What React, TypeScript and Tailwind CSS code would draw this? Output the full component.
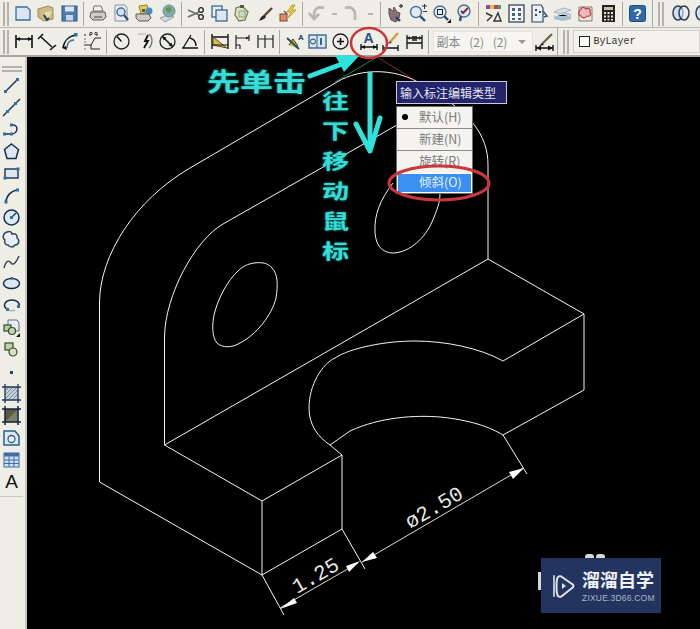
import type { ReactNode } from "react";

const navy = "#16324f";
const blue = "#2f6fa3";

const icons: Record<string, ReactNode> = {
  new: <path d="M3 4h11l3 3v10H3z" fill="#dbe6f2" stroke="#3b6f9e" strokeWidth="1.3" />,
  open: (
    <>
      <path d="M2 6l10-3 5 2v11l-9 2-6-4z" fill="#cdbb84" stroke="#9a8a58" />
      <path d="M9 9l7-1-3 7-5-1z" fill="#e6dcae" />
      <path d="M8 12l3 5 2-2" stroke="#24405c" strokeWidth="2" fill="none" />
    </>
  ),
  save: (
    <>
      <rect x="3" y="3" width="15" height="15" fill="#4f7cae" stroke="#2f5583" />
      <rect x="6" y="3.5" width="9" height="5" fill="#dbe6f2" />
      <rect x="7" y="12" width="7" height="5.5" fill="#c9d6e5" />
    </>
  ),
  print: (
    <>
      <path d="M6 3h7l2 5H5z" fill="#f2f2f2" stroke="#77706a" />
      <path d="M3 9h14l1 5-3 3H5l-3-3z" fill="#d0cbc4" stroke="#5c5650" />
      <path d="M6 14h8" stroke="#444" />
    </>
  ),
  preview: (
    <>
      <path d="M4 2h10l2 3v13H4z" fill="#e8eef5" stroke="#7d93a8" />
      <circle cx="10" cy="9" r="4" fill="#cfe0f0" stroke="#47698c" strokeWidth="1.4" />
      <path d="M13 12l4 5" stroke="#344e6a" strokeWidth="2.2" />
    </>
  ),
  plot: (
    <>
      <path d="M5 3l8-1 2 7-8 2z" fill="#e6cf50" stroke="#8d7d2a" />
      <circle cx="15" cy="8" r="3.5" fill="#4a8ac4" />
      <path d="M2 11h13l2 4-3 3H5l-3-3z" fill="#cfcac2" stroke="#5d5850" />
      <rect x="8" y="6" width="3" height="3" fill="#555" />
    </>
  ),
  publish: (
    <>
      <path d="M3 15l10-4 4 3-9 5z" fill="#d5d8dc" stroke="#9aa0a6" />
      <circle cx="12" cy="8" r="6" fill="#84a9a0" stroke="#6f8f98" />
      <path d="M9 5l4-1 2 3-3 3-3-2z" fill="#5b9a5a" />
    </>
  ),
  cut: (
    <>
      <circle cx="15" cy="7" r="2.3" fill="none" stroke="#222" strokeWidth="1.3" />
      <circle cx="15" cy="14" r="2.3" fill="none" stroke="#222" strokeWidth="1.3" />
      <path d="M2 7l11 5M2 14l11-5" stroke="#6d6d6d" strokeWidth="1.5" />
    </>
  ),
  copy: (
    <>
      <rect x="3" y="3" width="10" height="11" fill="#e5edf5" stroke="#2f5d88" strokeWidth="1.2" />
      <rect x="7" y="7" width="11" height="11" fill="#dce7f2" stroke="#2f5d88" strokeWidth="1.2" />
    </>
  ),
  paste: (
    <>
      <path d="M10 3l6 6-3 8-6 1-4-6 1-7z" fill="#e9e3b5" stroke="#6f7c62" strokeWidth="1.3" />
      <path d="M7 8h6v6H7z" fill="#c8dcc8" stroke="#8ba28b" />
      <rect x="8" y="2" width="4" height="3" fill="#555" />
    </>
  ),
  brush: (
    <>
      <path d="M17 5L9 13" stroke="#5a4635" strokeWidth="2.4" />
      <path d="M9 12l-3 2-2 4 5-2 2-2z" fill="#2e2a28" />
    </>
  ),
  match: (
    <>
      <rect x="2" y="11" width="7" height="7" fill="#e08a6a" stroke="#7b4a38" />
      <path d="M14 2l-5 7h4l-3 6 8-8h-4l3-5z" fill="#e8c93c" stroke="#a88b20" strokeWidth=".7" />
      <path d="M6 8l3 3" stroke="#555" strokeWidth="1.4" />
    </>
  ),
  undo: <path d="M17 5c-6-2-10 1-10 7v5M2 10l5 6 5-5" fill="none" stroke="#b7b5ae" strokeWidth="2.6" />,
  redo: <path d="M3 5c6-2 10 1 10 7v5" fill="none" stroke="#b7b5ae" strokeWidth="2.6" />,
  pan: (
    <>
      <path d="M4 5l4 3 1-4 3 5 3 1-1 5-3 4-5-2-2-6z" fill="#8c6f76" stroke="#51545c" />
      <path d="M14 3h4M16 1v4" stroke="#444" strokeWidth="1.4" />
      <path d="M11 14l4 4" stroke="#23415f" strokeWidth="2.4" />
    </>
  ),
  zoomReal: (
    <>
      <circle cx="8" cy="9" r="5.5" fill="#dfeaf3" stroke="#50708e" strokeWidth="1.4" />
      <path d="M12 13l5 5" stroke="#2f4c68" strokeWidth="2.4" />
      <path d="M14 3h5M16.5 1v5M15 8.5h4" stroke="#333" />
    </>
  ),
  zoomWin: (
    <>
      <circle cx="9" cy="9" r="6" fill="#dfeaf3" stroke="#50708e" strokeWidth="1.4" />
      <rect x="6.5" y="6.5" width="5" height="5" fill="none" stroke="#222" />
      <path d="M13 13l4 4" stroke="#2f4c68" strokeWidth="2.4" />
      <path d="M16 20l4-4v4z" fill="#111" />
    </>
  ),
  zoomPrev: (
    <>
      <circle cx="10" cy="8" r="6" fill="#dfeaf3" stroke="#50708e" strokeWidth="1.4" />
      <path d="M7 13l-1 5" stroke="#2f4c68" strokeWidth="2.4" />
      <path d="M14 5L9 10l-2-2" stroke="#7b2f3a" strokeWidth="2" fill="none" />
    </>
  ),
  props: (
    <>
      <rect x="3" y="2" width="4" height="4" fill="#8a49a8" />
      <rect x="7" y="2" width="4" height="4" fill="#e0c63a" />
      <rect x="11" y="2" width="4" height="4" fill="#c0455c" />
      <rect x="15" y="2" width="3" height="4" fill="#4a9a6a" />
      <path d="M3 10l6 3-5 5M15 10l-4 8h7z" fill="none" stroke="#333" strokeWidth="1.4" />
    </>
  ),
  grid: (
    <>
      <rect x="3" y="2" width="15" height="17" fill="#f3f5f7" stroke="#24384d" strokeWidth="1.2" />
      <path d="M6 5h3v3H6zM12 5h3v3h-3zM6 10h3v3H6zM12 10h3v3h-3zM6 15h3v2H6zM12 15h3v2h-3z" fill="#48627c" />
    </>
  ),
  palette: (
    <>
      <path d="M3 2h9l2 3v14H3z" fill="#edf1f5" stroke="#33495f" strokeWidth="1.2" />
      <path d="M6 6h2v2H6zM6 11h2v2H6zM10 8h2v2h-2z" fill="#33495f" />
      <path d="M14 8l4 5-3 1" fill="none" stroke="#2f5d88" strokeWidth="1.6" />
    </>
  ),
  sheet: (
    <>
      <path d="M2 9l9-4 8 2-9 4z" fill="#d6dfe8" stroke="#a9b6c2" />
      <path d="M2 13l9-4 8 2v5l-8 2-9-2z" fill="#a8bccc" />
      <path d="M3 13l8-2 7 2" stroke="#f3f6f9" />
    </>
  ),
  markup: (
    <>
      <path d="M4 4h13v14H4z" fill="#f0e6d8" stroke="#8b7a6c" />
      <path d="M6 6c2-3 4-1 5 0 3-2 5 1 4 3 2 2 0 5-3 4-2 3-5 2-6 0-3 0-3-5 0-7z" fill="#efb8bc" stroke="#b8404c" strokeWidth="1.2" />
    </>
  ),
  calc: (
    <>
      <rect x="4" y="2" width="13" height="17" fill="#26221f" />
      <rect x="6" y="4" width="9" height="3" fill="#bcc7a8" />
      <path d="M6 9h2v2H6zM9.5 9h2v2h-2zM13 9h2v2h-2zM6 12.5h2v2H6zM9.5 12.5h2v2h-2zM13 12.5h2v2h-2zM6 16h2v1.5H6zM9.5 16h2v1.5h-2zM13 16h2v1.5h-2z" fill="#e8e4dc" />
    </>
  ),
  help: (
    <>
      <rect x="2.5" y="2.5" width="16" height="16" rx="2" fill="#2e69a8" stroke="#1f4a7a" />
      <text x="10.5" y="15.5" textAnchor="middle" fontSize="14" fontWeight="700" fill="#fff" fontFamily="Liberation Sans, sans-serif">?</text>
    </>
  ),
  orbitA: (
    <>
      <ellipse cx="7" cy="10" rx="5" ry="7" fill="#cfe0ef" stroke="#2c3f55" strokeWidth="1.5" />
      <ellipse cx="13" cy="10" rx="5" ry="7" fill="#e2edf6" fillOpacity=".6" stroke="#2c3f55" strokeWidth="1.5" />
    </>
  ),

  dLinear: (
    <>
      <path d="M3 4v13M19 4v13M3 8h16" stroke="#111" strokeWidth="1.6" />
      <path d="M3 8l4-2v4zM19 8l-4-2v4z" fill="#111" />
    </>
  ),
  dAligned: <path d="M5 6l11 10M2 8l5-5M14 19l6-5" stroke="#111" strokeWidth="1.5" />,
  dArc: (
    <>
      <path d="M4 17C5 10 10 5 17 4" fill="none" stroke="#111" strokeWidth="1.5" />
      <path d="M8 17c0-5 3-8 7-8" fill="none" stroke={blue} strokeWidth="1.5" />
      <rect x="15" y="2" width="3.5" height="3.5" fill={blue} />
      <path d="M3 17l4-2 1 4z" fill="#111" />
    </>
  ),
  dOrd: (
    <>
      <path d="M2 4h2M7 4h2M14 4h2M2 14h7l4-7h6M9 14v4h9" fill="none" stroke="#222" />
      <path d="M2 8h2M2 11h2M2 18h2" stroke="#777" />
      <circle cx="14" cy="2.5" r="1.2" fill="none" stroke="#333" />
      <circle cx="9" cy="2.5" r="1.2" fill="none" stroke="#333" />
    </>
  ),
  dRadius: (
    <>
      <circle cx="10.5" cy="10.5" r="7.5" fill="none" stroke="#222" strokeWidth="1.3" />
      <path d="M10.5 10.5L6 5.5" stroke="#111" strokeWidth="1.5" />
    </>
  ),
  dJog: (
    <>
      <path d="M15 3c4 3 4 10 0 14" fill="none" stroke="#777" strokeWidth="1.3" />
      <path d="M14 4l-3 6h3l-4 7" fill="none" stroke="#111" strokeWidth="1.8" />
      <path d="M4 3h8" stroke="#aaa" />
    </>
  ),
  dDia: (
    <>
      <circle cx="10.5" cy="10.5" r="7.5" fill="none" stroke="#222" strokeWidth="1.3" />
      <path d="M5.5 5.5l10 10" stroke="#111" strokeWidth="1.5" />
      <path d="M5.5 5.5l4 1-3 3zM15.5 15.5l-4-1 3-3z" fill="#111" />
    </>
  ),
  dAng: (
    <>
      <path d="M2 17h16M3 17L11 4" fill="none" stroke="#111" strokeWidth="1.3" />
      <path d="M10 7c4 1 6 4 6 8" fill="none" stroke="#111" strokeWidth="1.3" />
    </>
  ),
  dQuick: (
    <>
      <path d="M3 3v15M19 3v15M3 6h16" stroke="#111" strokeWidth="1.4" />
      <path d="M4 6l14 11-14-3z" fill="#d8bf50" stroke="#5a5020" />
      <path d="M3 14h16" stroke="#111" />
    </>
  ),
  dBase: (
    <>
      <path d="M4 4v14M17 4v6M8 14v4M4 7h13M4 14h4" stroke="#222" strokeWidth="1.2" />
      <path d="M17 7l-3-1.5v3z" fill="#222" />
    </>
  ),
  dCont: <path d="M3 4v13M10 4v13M18 4v13M3 8h15" stroke="#222" strokeWidth="1.2" />,
  dTol: (
    <>
      <path d="M5 14l4-6 5 7-2 2" fill="#cbb84c" stroke="#3a3a1c" />
      <path d="M3 7l12 11" stroke="#2f4c68" strokeWidth="2" />
      <text x="14" y="9" fontSize="8" fontFamily="Liberation Sans, sans-serif" fill="#1d3f63" fontWeight="700">A</text>
    </>
  ),
  dFcf: (
    <>
      <rect x="2" y="4" width="17" height="13" fill="#d8e6f2" stroke="#2c5f90" strokeWidth="1.3" />
      <path d="M10 4v13" stroke="#2c5f90" />
      <circle cx="6" cy="10.5" r="2.5" fill="none" stroke="#1d3f63" />
      <path d="M14 7v7" stroke="#1d3f63" strokeWidth="1.6" />
    </>
  ),
  dCenter: (
    <>
      <circle cx="10.5" cy="10.5" r="7.5" fill="none" stroke="#222" strokeWidth="1.3" />
      <path d="M10.5 7v7M7 10.5h7" stroke="#111" strokeWidth="1.6" />
    </>
  ),
  dEdit: (
    <>
      <text x="10.5" y="12" textAnchor="middle" fontSize="14" fontWeight="700" fontFamily="Liberation Sans, sans-serif" fill="#1f4f8f">A</text>
      <path d="M3 13v6M19 13v6M3 16h16" stroke="#111" strokeWidth="1.4" />
      <path d="M3 16l4-2v4zM19 16l-4-2v4z" fill="#111" />
    </>
  ),
  dTedit: (
    <>
      <path d="M9 11l8-9" stroke="#c9a23a" strokeWidth="2.4" />
      <path d="M6 13l3-3 2 2z" fill="#6a4a20" />
      <path d="M2 14v6M17 14v6M2 17h15" stroke="#111" strokeWidth="1.3" />
    </>
  ),
  dUpdate: (
    <>
      <path d="M3 4v14M18 4v14M3 7h15M3 12h15" stroke="#111" strokeWidth="1.3" />
      <path d="M3 7l3-2v4zM18 7l-3-2v4zM8 5h5v5H8z" fill="#222" fillOpacity=".8" />
    </>
  ),
  dStyle: (
    <>
      <path d="M8 13L18 3" stroke="#6f5f48" strokeWidth="2.2" />
      <path d="M5 15l3-3 2 2z" fill="#26221f" />
      <path d="M2 14v6M19 14v6M2 17h17" stroke="#111" strokeWidth="1.4" />
      <path d="M2 17l5-2.5v5zM19 17l-5-2.5v5z" fill="#111" />
    </>
  ),

  line: (
    <>
      <path d="M5 16L16 5" stroke={navy} strokeWidth="1.5" />
      <rect x="3" y="15" width="3" height="3" fill={blue} />
      <rect x="15" y="3" width="3" height="3" fill={blue} />
    </>
  ),
  xline: (
    <>
      <path d="M2 19L19 2" stroke={navy} strokeWidth="1.5" />
      <rect x="5" y="13" width="3" height="3" fill={blue} />
      <rect x="13" y="5" width="3" height="3" fill={blue} />
    </>
  ),
  pline: (
    <>
      <path d="M2 15h8c7 0 8-9 2-9h-1" fill="none" stroke={navy} strokeWidth="1.5" />
      <rect x="2" y="13.5" width="3" height="3" fill={blue} />
      <rect x="9" y="13.5" width="3" height="3" fill={blue} />
      <rect x="9" y="4.5" width="3" height="3" fill={blue} />
    </>
  ),
  polygon: <path d="M10.5 3l7 5.5-2.5 9H6l-2.5-9z" fill="#dce7f1" stroke={navy} strokeWidth="1.5" />,
  rect: (
    <>
      <rect x="4" y="6" width="13" height="9" fill="#dce7f1" stroke={navy} strokeWidth="1.4" />
      <rect x="2.5" y="13.5" width="3" height="3" fill={blue} />
      <rect x="15.5" y="4.5" width="3" height="3" fill={blue} />
    </>
  ),
  arc: (
    <>
      <path d="M5 17C5 11 10 6 16 5" fill="none" stroke={navy} strokeWidth="1.5" />
      <rect x="3.5" y="15.5" width="3" height="3" fill={blue} />
      <rect x="15" y="3.5" width="3" height="3" fill={blue} />
    </>
  ),
  circle: (
    <>
      <circle cx="10.5" cy="10.5" r="7.5" fill="#dce7f1" stroke={navy} strokeWidth="1.5" />
      <path d="M10.5 10.5L15 6" stroke={navy} strokeWidth="1.3" />
      <rect x="9" y="9" width="3" height="3" fill={blue} />
    </>
  ),
  cloud: (
    <path
      d="M6 3c3-1 5 0 5 2 3-1 6 1 5 4 3 2 2 7-2 7-2 3-6 2-7 0-3 0-4-3-3-5-3-2-2-7 2-8z"
      fill="#e8eef4"
      stroke="#31465c"
      strokeWidth="1.5"
    />
  ),
  spline: <path d="M3 17C5 9 8 9 10 12s5 0 8-7" fill="none" stroke="#3a3f45" strokeWidth="1.4" />,
  ellipse: (
    <>
      <ellipse cx="10.5" cy="10.5" rx="8" ry="5" fill="#dce7f1" stroke={navy} strokeWidth="1.5" />
      <rect x="9.5" y="4" width="2.5" height="2.5" fill={blue} />
    </>
  ),
  ellArc: (
    <>
      <path d="M6 14C1 11 4 5 11 5c5 0 8 3 7 6" fill="none" stroke={navy} strokeWidth="1.5" />
      <path d="M7 15c3 1 5 1 7 0" fill="none" stroke="#9db4c6" strokeWidth="1.5" />
      <rect x="5" y="13" width="3" height="3" fill={blue} />
      <rect x="16" y="10" width="3" height="3" fill={blue} />
    </>
  ),
  insert: (
    <>
      <path d="M7 3h9l2 3v8H7z" fill="#e6edf4" stroke="#587089" />
      <rect x="3" y="8" width="7" height="6" fill="#b8cc9c" stroke="#2d4a33" strokeWidth="1.2" />
      <circle cx="11" cy="14" r="3.5" fill="#c7d4a6" stroke="#2d4a33" strokeWidth="1.2" />
      <path d="M15 20l4-4v4z" fill="#111" />
    </>
  ),
  block: (
    <>
      <rect x="4" y="4" width="8" height="7" fill="#c4d49c" stroke="#2d4a33" strokeWidth="1.2" />
      <circle cx="12" cy="13" r="4" fill="#d5e0c2" stroke="#2d4a33" strokeWidth="1.2" />
    </>
  ),
  point: <rect x="9" y="10" width="3" height="3" fill="#24466a" />,
  hatch: (
    <>
      <rect x="4" y="4" width="13" height="13" fill="#c3ced8" />
      <path d="M4 8l4-4M4 12l8-8M4 16L16 4M8 16l9-9M12 16l5-5" stroke="#7a8a99" />
      <path d="M4 1v19M17 1v19M1 4h19M1 17h19" stroke="#1c3956" strokeWidth="1.3" />
    </>
  ),
  gradient: (
    <>
      <rect x="4" y="4" width="13" height="13" fill="#595a45" />
      <path d="M4 17L17 4v13z" fill="#7d7f66" />
      <path d="M4 1v19M17 1v19M1 4h19M1 17h19" stroke="#10243a" strokeWidth="1.5" />
    </>
  ),
  region: (
    <>
      <path d="M3 4h11l4 5v9H3z" fill="#dce8f2" stroke="#2a5f8c" strokeWidth="1.5" />
      <circle cx="10.5" cy="12" r="3.5" fill="#f0f3f6" stroke="#2a5f8c" strokeWidth="1.3" />
    </>
  ),
  table: (
    <>
      <rect x="3" y="4" width="15" height="14" fill="#cfe0f2" stroke="#3d6ea8" />
      <rect x="3" y="4" width="15" height="3.5" fill="#3d6ea8" />
      <path d="M3 11h15M3 14.5h15M8 7.5V18M13 7.5V18" stroke="#3d6ea8" />
    </>
  ),
};

function Icon({ name, w = 23, h = 26 }: { name: string; w?: number; h?: number }) {
  return (
    <span className="flex shrink-0 items-center justify-center" style={{ width: w, height: h }}>
      <svg viewBox="0 0 21 21" className="h-[21px] w-[21px] overflow-visible">
        {icons[name]}
      </svg>
    </span>
  );
}

function Sep() {
  return (
    <span className="flex h-[24px] w-[6px] shrink-0 justify-center">
      <span className="h-full w-px bg-[#a9a79f]" />
    </span>
  );
}

function Grip({ className = "" }: { className?: string }) {
  return (
    <span className={`flex h-[24px] shrink-0 gap-[2px] ${className}`}>
      <span className="h-full w-[2px] border-x border-x-[#b4b2aa] bg-white" />
      <span className="h-full w-[2px] border-x border-x-[#b4b2aa] bg-white" />
    </span>
  );
}

function Drop({ w }: { w: number }) {
  return (
    <span className="flex shrink-0 items-center justify-center" style={{ width: w }}>
      <span className="h-[2px] w-[5px] bg-[#b7b5ae]" />
    </span>
  );
}

const leftTools = [
  "line", "xline", "pline", "polygon", "rect", "arc", "circle", "cloud", "spline", "ellipse",
  "ellArc", "insert", "block", "point", "hatch", "gradient", "region", "table",
];

function DrawingLines() {
  return (
    <g fill="none" stroke="#f4f4f4" strokeWidth="1">
      <path d="M99.5 482V302C100 255 135 200 190 168L337 82C360 68 400 66 430 90C470 112 488 135 488 165V259" />
      <path d="M164.500 445V337C165 295 195 240 223 224L397 125" />
      <path d="M254 263C262 262 268 263 272 268C278 274 278 285 276 298C272 315 256 335 240 343C232 348 222 348 217 343C212 337 212 325 214 315C218 298 228 280 238 271C243 266 248 264 254 263Z" />
      <path d="M393 183C380 200 374 215 375 232C376 248 384 253 394 253C410 252 425 238 432 222C437 210 440 203 440 193" />
      <path d="M99.5 482L262 575L342 529V455L262 501L164.5 445L488 259L584 314V390L503 435C490 427 470 420 440 417C415 415 380 417 350 431L330 445L342 455" />
      <path d="M262 501V575M584 314L503 361C480 348 445 341 415 341C385 341 350 348 335 358C322 364 309 385 309 408C309 425 318 437 330 445" />
      <path d="M503 435L527 474M342 529L365 569M262 575L284 615" />
      <path d="M280 608L358 563M362 562L523 468" strokeWidth=".9" />
      <g fill="#fff" stroke="none">
        <path d="M280 609L294 598L297 603Z" />
        <path d="M360 561L346 566L349 572Z" />
        <path d="M362 562L373 552L377 558Z" />
        <path d="M524 468L509 472L513 479Z" />
      </g>
      <g fill="#e8e8e8" stroke="none" fontFamily="Liberation Mono, monospace" fontSize="21">
        <text x="297" y="594" transform="rotate(-30 297 594)">1.25</text>
        <text x="410" y="529" transform="rotate(-30 410 529)">ø2.50</text>
      </g>
    </g>
  );
}

export default function App() {
  return (
    <div className="relative flex h-[629px] w-[700px] flex-col overflow-hidden bg-black font-['Noto_Sans_CJK_SC',sans-serif]">
      {/* standard toolbar */}
      <div className="flex h-[28px] shrink-0 items-center overflow-hidden border-b border-b-[#b9b7af] bg-[#eeede6]">
        <Grip className="w-[11.5px] pl-[3px]" />
        <Icon name="new" />
        <Icon name="open" />
        <Icon name="save" />
        <Sep />
        <Icon name="print" />
        <Icon name="preview" />
        <Icon name="plot" />
        <Icon name="publish" />
        <Sep />
        <Icon name="cut" />
        <Icon name="copy" />
        <Icon name="paste" />
        <Icon name="brush" />
        <Icon name="match" />
        <Sep />
        <Icon name="undo" />
        <Drop w={12} />
        <Icon name="redo" />
        <Drop w={14} />
        <Sep />
        <Icon name="pan" />
        <Icon name="zoomReal" />
        <Icon name="zoomWin" />
        <Icon name="zoomPrev" />
        <Sep />
        <Icon name="props" />
        <Icon name="grid" />
        <Icon name="palette" />
        <Icon name="sheet" />
        <Icon name="markup" />
        <Icon name="calc" />
        <Sep />
        <Icon name="help" />
        <span className="ml-[3px] h-full w-px shrink-0 bg-[#a9a79f]" />
        <Grip className="ml-[5px] w-[12px]" />
        <Icon name="orbitA" />
        <Icon name="orbitA" />
      </div>

      {/* dimension toolbar */}
      <div className="flex h-[29px] shrink-0 items-center overflow-hidden border-b-2 border-b-[#a8a69e] bg-[#eeede6]">
        <Grip className="w-[11.5px] pl-[3px]" />
        <Icon name="dLinear" />
        <Icon name="dAligned" />
        <Icon name="dArc" />
        <Icon name="dOrd" />
        <Sep />
        <Icon name="dRadius" />
        <Icon name="dJog" />
        <Icon name="dDia" />
        <Icon name="dAng" />
        <Sep />
        <Icon name="dQuick" />
        <Icon name="dBase" />
        <Icon name="dCont" />
        <Sep />
        <Icon name="dTol" />
        <Icon name="dFcf" />
        <Icon name="dCenter" />
        <span className="w-[5px] shrink-0" />
        <Icon name="dEdit" />
        <Icon name="dTedit" />
        <Icon name="dUpdate" />
        <Sep />
        <span className="ml-[1px] flex h-[21px] w-[100px] shrink-0 items-center justify-between border border-[#e4e2da] bg-[#f6f5f1] pl-[3px] pr-[3px] text-[12px] text-[#8a8a8a]">
          <span className="whitespace-pre [word-spacing:6px]">副本 (2) (2)</span>
          <span className="mr-[3px] h-0 w-0 border-x-[4px] border-t-[4px] border-x-transparent border-t-[#9a9a9a]" />
        </span>
        <Icon name="dStyle" />
        <span className="ml-[1px] h-full w-px shrink-0 bg-[#a9a79f]" />
        <Grip className="ml-[5px] w-[10px]" />
        <span className="flex h-[23px] flex-1 items-center gap-[4px] border border-[#d4d2ca] bg-[#f3f2ec] pl-[5px] font-['Liberation_Mono',monospace] text-[10px] text-[#333]">
          <span className="h-[11px] w-[11px] border border-[#222] bg-white" />
          ByLayer
        </span>
      </div>

      <div className="flex min-h-0 flex-1">
        {/* draw toolbar */}
        <div className="flex w-[27px] shrink-0 flex-col items-center border-r-2 border-r-[#c9c7bf] bg-[#eeede6] pr-[2px]">
          <div className="mb-[2px] mt-[9px] flex w-[20px] flex-col gap-[2px]">
            <span className="h-[2px] border-y border-y-[#b4b2aa] bg-white" />
            <span className="h-[2px] border-y border-y-[#b4b2aa] bg-white" />
          </div>
          {leftTools.map((t) => (
            <Icon key={t} name={t} w={24} h={22} />
          ))}
          <span className="flex h-[22px] items-center font-['Liberation_Sans',sans-serif] text-[19px] leading-none text-[#111]">A</span>
          <span className="mt-[4px] h-px w-full bg-[#c9c7bf]" />
        </div>

        {/* model space */}
        <div className="relative min-w-0 flex-1 bg-black">
          <svg viewBox="27 57 673 572" className="block h-full w-full">
            <DrawingLines />
          </svg>

          {/* watermark */}
          <span className="absolute left-[511px] top-[515px] h-[18px] w-[4px] bg-[#d8d8d8]" />
          <span className="absolute left-[558px] top-[497px] h-[6px] w-[9px] rounded-full bg-[#d8d8d8]" />
          <span className="absolute left-[569px] top-[497px] h-[6px] w-[9px] rounded-full bg-[#d8d8d8]" />
          <div className="absolute left-[514px] top-[501px] flex h-[55px] w-[120px] items-center gap-[6px] bg-[#23355f] pl-[7px]">
            <svg viewBox="0 0 28 28" className="h-[28px] w-[28px]">
              <path d="M6 4v20" stroke="#b8c2d6" strokeWidth="2" strokeLinecap="round" fill="none" />
              <path d="M10 5c1-1 3-1 4 0l10 7c2 1 2 3 0 4l-10 8c-1 1-3 1-4 0-2-2-2-17 0-19z" fill="none" stroke="#dfe4ee" strokeWidth="2" />
              <path d="M14 11v6l4-3z" fill="#dfe4ee" />
            </svg>
            <div className="flex flex-col">
              <span className="whitespace-nowrap text-[18px] font-bold leading-[20px] text-[#eef1f6]">溜溜自学</span>
              <span className="mt-[4px] whitespace-nowrap font-['Liberation_Sans',sans-serif] text-[8.5px] leading-[10px] tracking-[0.2px] text-[#a9b4c9]">ZIXUE.3D66.COM</span>
            </div>
          </div>

          {/* tooltip and edit type menu */}
          <div className="absolute left-[369px] top-[24px] flex h-[23px] w-[111px] items-center border border-[#c8c8e0] bg-[#24246b] pl-[3px] text-[12px] text-[#e4e6f2]">
            输入标注编辑类型
          </div>
          <div className="absolute left-[369px] top-[49px] flex w-[77px] flex-col border border-[#6e6e6e] bg-[#f4f3ef] text-[12.5px] text-[#7c7c7c]">
            <div className="relative flex h-[21.5px] items-center border-b border-b-[#8a8a8a] pl-[22px]">
              <span className="absolute left-[5px] h-[6px] w-[6px] rounded-full bg-black" />
              默认(H)
            </div>
            <div className="flex h-[22px] items-center border-b border-b-[#8a8a8a] pl-[22px]">新建(N)</div>
            <div className="flex h-[22px] items-center pl-[22px]">旋转(R)</div>
            <div className="flex h-[20px] items-center border border-white bg-[#3a8ff0] pl-[21px] text-[#e9f2ff]">倾斜(O)</div>
          </div>

          {/* hand written notes */}
          <span className="absolute left-[180px] top-[3px] origin-center scale-y-75 whitespace-nowrap text-[33px] font-bold leading-[40px] text-[#38dcd6] [text-shadow:0_0_3px_#0a9c98]">
            先单击
          </span>
          <div className="absolute left-[295px] top-[29px] flex origin-top scale-y-75 flex-col text-[27px] font-bold leading-[40px] text-[#38dcd6] [text-shadow:0_0_3px_#0a9c98]">
            <span>往</span>
            <span>下</span>
            <span>移</span>
            <span>动</span>
            <span>鼠</span>
            <span>标</span>
          </div>
        </div>
      </div>

      {/* marks that were painted over the whole window */}
      <svg viewBox="0 0 700 629" className="pointer-events-none absolute inset-0 h-[629px] w-[700px]">
        <path d="M377 57L415 80" stroke="#a33" strokeWidth=".8" />
        <path d="M377 57L335 82" stroke="#3a6" strokeWidth=".8" />
        <ellipse cx="369" cy="43" rx="18" ry="15" fill="none" stroke="#c9353c" strokeWidth="2.5" />
        <ellipse cx="439" cy="183" rx="50" ry="17" fill="none" stroke="#c9383e" strokeWidth="3" />
        <path d="M310 76L350 61" stroke="#2fe3dc" strokeWidth="5" strokeLinecap="round" />
        <path d="M335 55L359 56L344 72Z" fill="#2fe3dc" />
        <path d="M370 72V148" stroke="#2fe3dc" strokeWidth="5" />
        <path d="M356 124L370 151L380 118" fill="none" stroke="#2fe3dc" strokeWidth="5" strokeLinecap="round" strokeLinejoin="round" />
      </svg>
    </div>
  );
}
